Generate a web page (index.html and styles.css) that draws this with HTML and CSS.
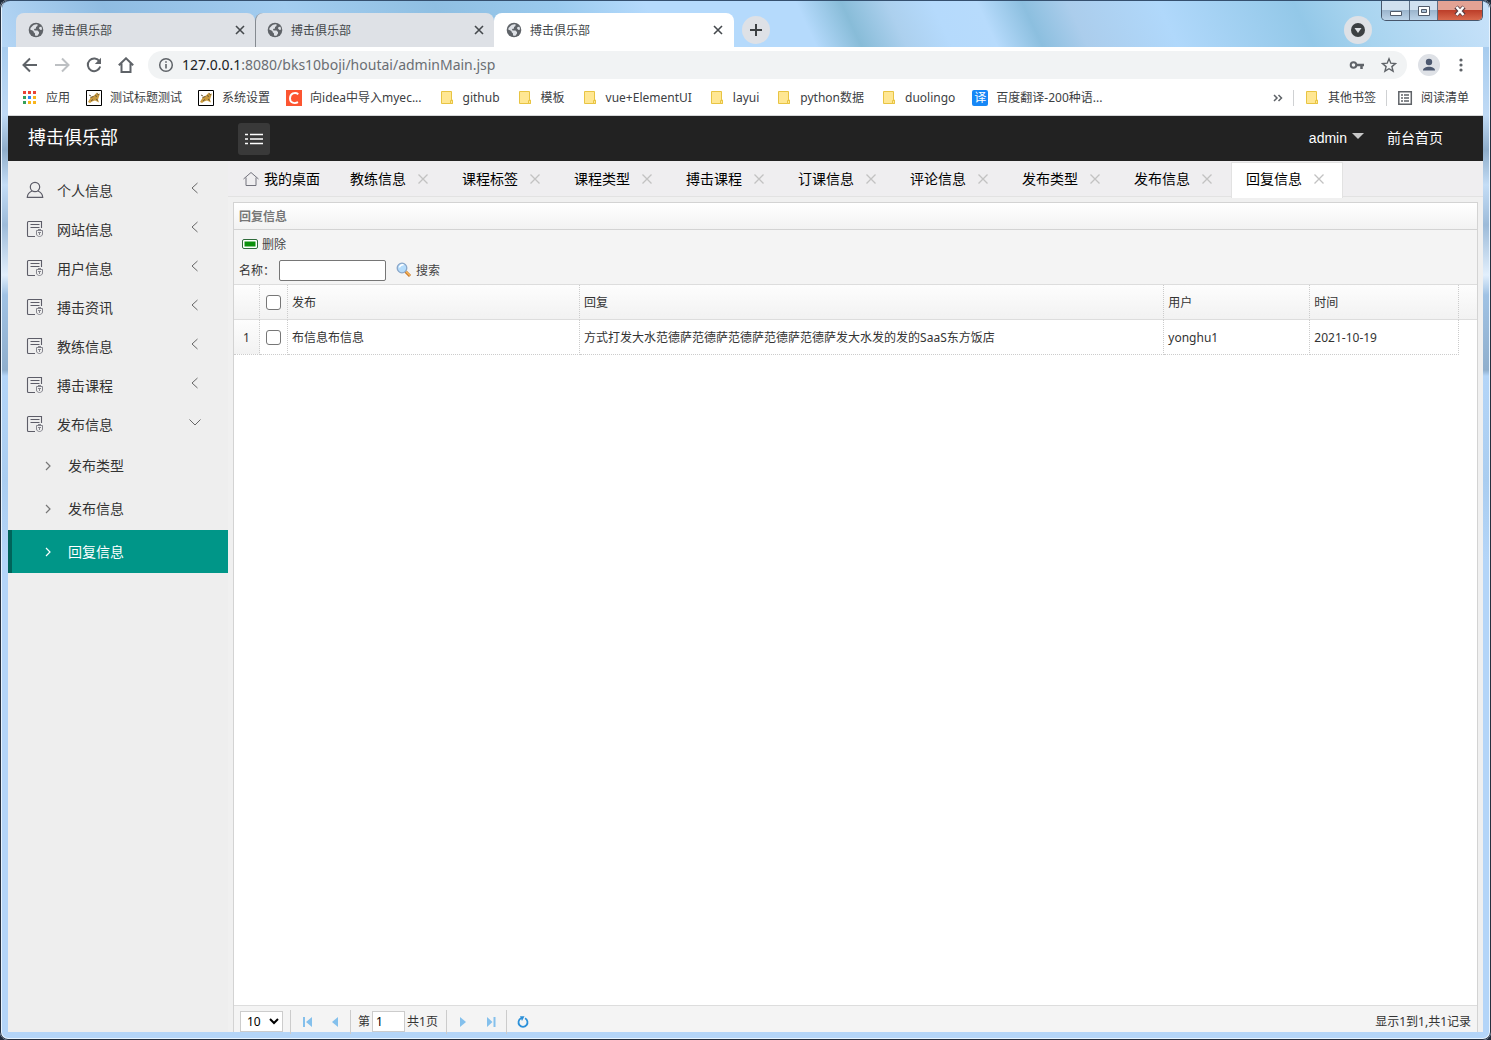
FILE: index.html
```
<!DOCTYPE html>
<html lang="zh-CN">
<head>
<meta charset="utf-8">
<title>搏击俱乐部</title>
<link rel="stylesheet" href="styles.css">
</head>
<body>
<svg class="defs" aria-hidden="true">
  <symbol id="globe" viewBox="0 0 16 16"><circle cx="8" cy="8" r="7.3" fill="#5f6368"/><path d="M4 4.500c1.500-2 4-2.700 5.500-2.200L9.500 4 8 5v1.500L6 7l.5 1.500h3L11 10v1.500l-1.500 2.200C7.500 14 7 13.500 7 13v-1.500L5.500 10V9L2.200 7.500C2.300 6.300 3 5.300 4 4.500z" fill="#dee1e6"/><path d="M11.500 5l2-.2.6 2.700-1.600.5-1.500-1.500z" fill="#dee1e6"/></symbol>
  <symbol id="x" viewBox="0 0 10 10"><path d="M1 1l8 8M9 1L1 9" fill="none" stroke="currentColor" stroke-width="1.600"/></symbol>
  <symbol id="thin-x" viewBox="0 0 10 10"><path d="M.5.5l9 9M9.500.5l-9 9" fill="none" stroke="currentColor" stroke-width="1.300"/></symbol>
  <symbol id="folder" viewBox="0 0 16 16"><path d="M2.500 1.500h10v8.500h1v3.500h-11z" fill="#ffe793" stroke="#e8c443"/><path d="M11.500 13.500V10.500h2v3z" fill="#ffe793" stroke="#e8c443"/></symbol>
  <symbol id="cat" viewBox="0 0 16 16"><path d="M.5.5h15v15H.5z" fill="#fff" stroke="#000"/><path d="M2 12l3-5 3-1.500 3-3 1 1.500 2-.5-1 3-1 3 1 3-2-1-2-1-3 1-2 1.500z" fill="#c99a3f"/><path d="M4.500 7.500l3-1M9 5.500l2 1M5 11l2-1.500M10 9l2 1.500M3 5l2 1M11 3.500l2 1.500" stroke="#6b5a3a"/></symbol>
  <symbol id="doc" viewBox="0 0 18 18"><path d="M15.500 8V1.500H2.500A1 1 0 0 0 1.500 2.500V15.500A1 1 0 0 0 2.500 16.500H9M4.500 4.500h9M4.500 7.500h9" fill="none" stroke="#5d5d68" stroke-width="1.100"/><path d="M10.500 10.500h6v3.500c0 1.500-1.500 2.500-3 2.500s-3-1-3-2.500zM12 12.500h3M13.500 12.500V15M12 9.500h3" fill="none" stroke="#85858d"/></symbol>
  <symbol id="left" viewBox="0 0 12 12"><path d="M8.500 1L3 6l5.500 5" fill="none" stroke="currentColor"/></symbol>
  <symbol id="right" viewBox="0 0 8 10"><path d="M2 1l4 4-4 4" fill="none" stroke="currentColor" stroke-width="1.200"/></symbol>
</svg>

<div class="titlebar">
  <div class="browser-tabs">
    <div class="btab"><svg class="i16"><use href="#globe"/></svg><span>搏击俱乐部</span><button aria-label="关闭"><svg class="i10"><use href="#x"/></svg></button></div>
    <div class="btab split"><svg class="i16"><use href="#globe"/></svg><span>搏击俱乐部</span><button aria-label="关闭"><svg class="i10"><use href="#x"/></svg></button></div>
    <div class="btab current"><svg class="i16"><use href="#globe"/></svg><span>搏击俱乐部</span><button aria-label="关闭"><svg class="i10"><use href="#x"/></svg></button></div>
  </div>
  <button class="round" aria-label="新标签页"><svg width="14" height="14"><path d="M7 1v12M1 7h12" stroke="#3c4043" stroke-width="2"/></svg></button>
  <button class="round search-tabs" aria-label="搜索标签页"><svg width="14" height="14"><circle cx="7" cy="7" r="7" fill="#3c4043"/><path d="M3.500 5h7L7 10z" fill="#dee1e6"/></svg></button>
  <div class="window-buttons">
    <button aria-label="最小化"><svg width="14" height="12"><path d="M1.500 6.500h11v4h-11z" fill="#fff" stroke="#515b6b"/></svg></button>
    <button aria-label="最大化"><svg width="14" height="12"><path d="M1.500 1.500h11v9h-11z" fill="#fff" stroke="#515b6b"/><path d="M4.500 4.500h5v3h-5z" fill="#a9bfd5" stroke="#515b6b"/></svg></button>
    <button class="shut" aria-label="关闭窗口"><svg width="14" height="12"><path d="M3 2l8 8M11 2l-8 8" stroke="#5a3d42" stroke-width="4.500"/><path d="M3.500 2l7 8M10.500 2l-7 8" stroke="#fff" stroke-width="2.500"/></svg></button>
  </div>
</div>

<div class="browser-bar">
  <div class="address-row">
    <button aria-label="后退"><svg class="i16" viewBox="0 0 16 16"><path d="M15 8H2M8 1.500L1.500 8 8 14.500" fill="none" stroke="#5f6368" stroke-width="2"/></svg></button>
    <button aria-label="前进"><svg class="i16" viewBox="0 0 16 16"><path d="M1 8h13M8 1.500L14.500 8 8 14.500" fill="none" stroke="#bdc0c3" stroke-width="2"/></svg></button>
    <button aria-label="刷新"><svg class="i16" viewBox="0 0 16 16"><path d="M13.500 4.500A6.300 6.300 0 1 0 14.200 9.500" fill="none" stroke="#5f6368" stroke-width="2"/><path d="M15 .8V7H8.800z" fill="#5f6368"/></svg></button>
    <button aria-label="主页"><svg class="i16" viewBox="0 0 16 16"><path d="M.8 8.200L8 1.300l7.200 6.900M3.500 6.500V15h9V6.500" fill="none" stroke="#5f6368" stroke-width="2"/></svg></button>
    <div class="omnibox">
      <svg class="i16" viewBox="0 0 16 16"><circle cx="8" cy="8" r="6.300" fill="none" stroke="#5f6368" stroke-width="1.500"/><path d="M8 7v4.500M8 4.200v1.600" stroke="#5f6368" stroke-width="1.600"/></svg>
      <span class="url"><b>127.0.0.1</b>:8080/bks10boji/houtai/adminMain.jsp</span>
      <button aria-label="密码"><svg class="i16" viewBox="0 0 16 16"><circle cx="4.500" cy="8" r="2.800" fill="none" stroke="#5f6368" stroke-width="2"/><path d="M7 8h8M12.500 8v4" stroke="#5f6368" stroke-width="2.500"/></svg></button>
      <button aria-label="收藏"><svg class="i16" viewBox="0 0 16 16"><path d="M8 1.800l1.800 4.400 4.700.4-3.600 3 1.200 4.600L8 11.700l-4.100 2.500 1.200-4.600-3.600-3 4.700-.4z" fill="none" stroke="#5f6368" stroke-width="1.400"/></svg></button>
    </div>
    <button class="avatar" aria-label="用户"><svg width="22" height="22"><circle cx="11" cy="11" r="11" fill="#dee1e6"/><circle cx="11" cy="8" r="3.200" fill="#4d5970"/><path d="M5 16.500c0-5 12-5 12 0z" fill="#4d5970"/></svg></button>
    <button aria-label="菜单"><svg class="i16" viewBox="0 0 16 16"><g fill="#5f6368"><circle cx="8" cy="3" r="1.600"/><circle cx="8" cy="8" r="1.600"/><circle cx="8" cy="13" r="1.600"/></g></svg></button>
  </div>
  <nav class="bookmarks">
    <a href="#"><svg class="i16" viewBox="0 0 16 16"><path d="M1 1h3v3H1zM6 1h3v3H6zM11 1h3v3h-3z" fill="#ea4335"/><path d="M1 6h3v3H1zM1 11h3v3H1z" fill="#34a05a"/><path d="M6 6h3v3H6z" fill="#2b86f5"/><path d="M11 6h3v3h-3zM6 11h3v3H6zM11 11h3v3h-3z" fill="#f9b51c"/></svg>应用</a>
    <a href="#"><svg class="i16"><use href="#cat"/></svg>测试标题测试</a>
    <a href="#"><svg class="i16"><use href="#cat"/></svg>系统设置</a>
    <a class="wide" href="#"><svg class="i16" viewBox="0 0 16 16"><path d="M0 0h16v16H0z" fill="#fc5531"/><path d="M12.300 4.200C9 1.500 4 3.500 4 8.500c0 4.500 4.500 5.500 8 3.700" fill="none" stroke="#fff" stroke-width="1.900"/></svg>向idea中导入myec...</a>
    <a class="wide" href="#"><svg class="i16"><use href="#folder"/></svg>github</a>
    <a class="wide" href="#"><svg class="i16"><use href="#folder"/></svg>模板</a>
    <a class="wide" href="#"><svg class="i16"><use href="#folder"/></svg>vue+ElementUI</a>
    <a class="wide" href="#"><svg class="i16"><use href="#folder"/></svg>layui</a>
    <a class="wide" href="#"><svg class="i16"><use href="#folder"/></svg>python数据</a>
    <a class="wide" href="#"><svg class="i16"><use href="#folder"/></svg>duolingo</a>
    <a href="#"><span class="fanyi">译</span>百度翻译-200种语...</a>
    <button class="more" aria-label="更多书签"><svg width="10" height="8"><path d="M1 1l3 3-3 3M5.500 1l3 3-3 3" fill="none" stroke="#5f6368" stroke-width="1.500"/></svg></button>
    <a class="ruled" href="#"><svg class="i16"><use href="#folder"/></svg>其他书签</a>
    <a class="ruled" href="#"><svg class="i16" viewBox="0 0 16 16"><path d="M1.800 1.800h12.500v12.500H1.800z" fill="none" stroke="#5f6368" stroke-width="1.500"/><path d="M4 5h2M7 5h5M4 8h2M7 8h5M4 11h2M7 11h5" stroke="#5f6368" stroke-width="1.500"/></svg>阅读清单</a>
  </nav>
</div>

<header class="app-head">
  <h1>搏击俱乐部</h1>
  <button class="toggle" aria-label="折叠菜单"><svg width="18" height="12"><path d="M0 1.500h3M5 1.500h13M0 6h3M5 6h13M0 10.500h3M5 10.500h13" stroke="#fff" stroke-width="1.300"/></svg></button>
  <button class="account">admin <i></i></button>
  <a href="#">前台首页</a>
</header>

<div class="app">
  <nav class="side">
    <button><svg class="i18" viewBox="0 0 18 18"><circle cx="9" cy="6" r="4.700" fill="none" stroke="#5d5d68" stroke-width="1.200"/><path d="M6 10C3.500 11 1.500 13 1.300 16.300h15.400C16.500 13 14.500 11 12 10" fill="none" stroke="#5d5d68" stroke-width="1.200"/></svg><span>个人信息</span><svg class="chev"><use href="#left"/></svg></button>
    <button><svg class="i18"><use href="#doc"/></svg><span>网站信息</span><svg class="chev"><use href="#left"/></svg></button>
    <button><svg class="i18"><use href="#doc"/></svg><span>用户信息</span><svg class="chev"><use href="#left"/></svg></button>
    <button><svg class="i18"><use href="#doc"/></svg><span>搏击资讯</span><svg class="chev"><use href="#left"/></svg></button>
    <button><svg class="i18"><use href="#doc"/></svg><span>教练信息</span><svg class="chev"><use href="#left"/></svg></button>
    <button><svg class="i18"><use href="#doc"/></svg><span>搏击课程</span><svg class="chev"><use href="#left"/></svg></button>
    <button aria-expanded="true"><svg class="i18"><use href="#doc"/></svg><span>发布信息</span><svg class="chev" viewBox="0 0 12 12"><path d="M.5 3.500L6 9l5.500-5.500" fill="none" stroke="currentColor"/></svg></button>
    <a href="#"><svg class="arrow"><use href="#right"/></svg>发布类型</a>
    <a href="#"><svg class="arrow"><use href="#right"/></svg>发布信息</a>
    <a href="#" class="selected"><svg class="arrow"><use href="#right"/></svg>回复信息</a>
  </nav>

  <main>
    <div class="page-tabs">
      <a class="home" href="#"><svg width="16" height="16" viewBox="0 0 16 16"><path d="M.5 8L8 1.500 15.500 8M3 6.500v8h10v-8" fill="none" stroke="#73737d"/></svg>我的桌面</a>
      <a href="#">教练信息<svg class="i10"><use href="#thin-x"/></svg></a>
      <a href="#">课程标签<svg class="i10"><use href="#thin-x"/></svg></a>
      <a href="#">课程类型<svg class="i10"><use href="#thin-x"/></svg></a>
      <a href="#">搏击课程<svg class="i10"><use href="#thin-x"/></svg></a>
      <a href="#">订课信息<svg class="i10"><use href="#thin-x"/></svg></a>
      <a href="#">评论信息<svg class="i10"><use href="#thin-x"/></svg></a>
      <a href="#">发布类型<svg class="i10"><use href="#thin-x"/></svg></a>
      <a href="#">发布信息<svg class="i10"><use href="#thin-x"/></svg></a>
      <a href="#" class="current">回复信息<svg class="i10"><use href="#thin-x"/></svg></a>
    </div>

    <section class="panel">
      <h2>回复信息</h2>
      <div class="tools">
        <div class="tool-row"><button class="delete"><svg width="16" height="16"><rect x=".5" y="3.500" width="15" height="9" rx="1.500" fill="#fff" stroke="#2f6b3a"/><path d="M2.500 5.500h11v5h-11z" fill="#0c910c"/></svg><span>删除</span></button></div>
        <div class="tool-row">
          <label for="name">名称：</label><input id="name" type="text">
          <button class="search"><svg width="16" height="16"><path d="M9.500 9.500l4.500 4.500" stroke="#c8772a" stroke-width="3"/><path d="M9.500 9l4.500 4.500" stroke="#f5b65a" stroke-width="1.500"/><circle cx="6" cy="6" r="4.800" fill="#b5dcfb" stroke="#8aa6c8" stroke-width="1.300"/><path d="M3.500 5.500a3 3 0 0 1 4-2.500" stroke="#fff" stroke-width="1.500" fill="none"/></svg><span>搜索</span></button>
        </div>
      </div>
      <table>
        <colgroup><col class="c-num"><col class="c-check"><col class="c-post"><col class="c-reply"><col class="c-user"><col><col class="c-end"></colgroup>
        <thead><tr><th></th><th><input type="checkbox" aria-label="全选"></th><th>发布</th><th>回复</th><th>用户</th><th>时间</th><th></th></tr></thead>
        <tbody><tr><td>1</td><td><input type="checkbox" aria-label="选择第1行"></td><td>布信息布信息</td><td>方式打发大水范德萨范德萨范德萨范德萨范德萨发大水发的发的SaaS东方饭店</td><td>yonghu1</td><td>2021-10-19</td><td></td></tr></tbody>
      </table>
      <div class="pager">
        <select aria-label="每页条数"><option>10</option></select>
        <span class="rule"></span>
        <button aria-label="首页"><svg width="12" height="12"><path d="M2 1h2v10H2zM11 1v10L5 6z" fill="#84c0ec"/></svg></button>
        <button aria-label="上一页"><svg width="12" height="12"><path d="M9 1v10L3 6z" fill="#84c0ec"/></svg></button>
        <span class="rule"></span>
        <label for="page">第</label><input id="page" type="text" value="1"><span class="total">共1页</span>
        <span class="rule"></span>
        <button aria-label="下一页"><svg width="12" height="12"><path d="M3 1v10l6-5z" fill="#84c0ec"/></svg></button>
        <button aria-label="末页"><svg width="12" height="12"><path d="M2 1v10l5.500-5zM8.500 1h2v10h-2z" fill="#84c0ec"/></svg></button>
        <span class="rule"></span>
        <button aria-label="刷新表格"><svg width="12" height="12"><path d="M4 2.300A4.500 4.500 0 1 0 8 2.300" fill="none" stroke="#2b90d9" stroke-width="1.800"/><path d="M3 .3h4.500L5 5z" fill="#2b90d9"/></svg></button>
        <span class="count">显示1到1,共1记录</span>
      </div>
    </section>
  </main>
</div>
</body>
</html>
```
FILE: styles.css
```
* { box-sizing: border-box; }

html { background: #1f2a3a; }

body {
  margin: 0;
  min-height: 100vh;
  display: flex;
  flex-direction: column;
  padding: 0 8px 8px;
  border-radius: 8px;
  box-shadow: inset 0 0 0 1px #26303f, inset 0 0 0 2px #e8f4ff;
  background: linear-gradient(#a5cbee 40px, #c0daf5 115px, #8fadca 150px, #c4ddf6 185px, #9dbbd9 225px, #e2effc 275px, #a0c2e4 295px, #90afcd 370px, #b4d5f8 376px, #aacdf0 480px, #b4d5f8 560px);
  font: 12px/16px "Noto Sans", "Noto Sans CJK SC", sans-serif;
  color: #333;
}

button, input, select { font: inherit; color: inherit; }
button { padding: 0; border: 0; background: none; display: flex; align-items: center; justify-content: center; }
a { color: inherit; text-decoration: none; }
svg { display: block; flex: none; }
.defs { position: absolute; width: 0; height: 0; }
.i10 { width: 10px; height: 10px; }
.i16 { width: 16px; height: 16px; }
.i18 { width: 18px; height: 18px; }

/* Window frame and tab strip */
.titlebar {
  height: 47px;
  display: flex;
  margin: 0 -6px;
  padding: 0 6px 0 14px;
  border-top: 1px solid #35506f;
  border-radius: 8px 8px 0 0;
  background: linear-gradient(65deg, #b5d6f5, #8fbce2 8%, #a3cdf0 20%, #8fbfe2 30%, #9acaee 38%, #b5dafc 44%, #b5dafc 54%, #88bcd8 57%, #acd0ee 60%, #b5dafc 63%, #b7dbfc 66%, #8cbfdf 69%, #abcdec 72%, #b0d8fb 78%, #93c8e8 87%, #a8d4ef 91%, #c8e2fa);
}
.browser-tabs { display: flex; align-items: flex-end; }
.btab {
  width: 239px;
  height: 34px;
  display: flex;
  align-items: center;
  gap: 8px;
  padding: 0 10px 0 12px;
  background: #dee1e6;
  border-radius: 8px 8px 0 0;
  color: #45494d;
}
.btab span { flex: 1; padding-top: 2px; }
.btab.split { border-left: 1px solid #858a90; padding-left: 11px; }
.btab.current { background: #fff; width: 240px; padding-right: 11px; }
.round { width: 28px; height: 28px; margin: 15px 0 0 8px; border-radius: 50%; background: #dee1e6; }
.search-tabs { margin-left: auto; }
.window-buttons { display: flex; width: 102px; height: 20px; margin-left: 9px; border: 1px solid #47566b; border-top: 0; border-radius: 0 0 5px 5px; overflow: hidden; }
.window-buttons button { width: 28px; background: linear-gradient(#d0e0ef 45%, #9cb5cd 50%, #bcd3e8); border-right: 1px solid #5d6e84; }
.window-buttons .shut { flex: 1; border: 0; background: linear-gradient(#e2a294 45%, #bd3f2a 50%, #d9694d); }

/* Address row and bookmarks */
.browser-bar { background: #fff; border-bottom: 1px solid #d5d7d8; }
.address-row { display: flex; align-items: center; gap: 16px; height: 36px; padding: 0 14px; }
.omnibox { flex: 1; display: flex; align-items: center; gap: 16px; height: 28px; margin: 0 -5px 0 -2px; padding: 0 10px; border-radius: 14px; background: #f1f3f4; }
.url { flex: 1; margin-left: -8px; font-size: 14px; line-height: 20px; color: #6a6e73; }
.url b { font-weight: 400; color: #202124; }
.avatar { margin-right: -3px; }
.bookmarks { display: flex; align-items: center; gap: 16px; height: 32px; padding: 0 14px 2px; color: #3c4043; white-space: nowrap; }
.bookmarks a { display: flex; align-items: center; gap: 8px; }
.bookmarks .wide { margin-right: 1px; }
.more { margin-left: auto; margin-right: -6px; }
.fanyi { width: 16px; height: 16px; border-radius: 2px; background: #1687f6; color: #fff; text-align: center; }
.bookmarks .ruled { border-left: 1px solid #cfd1d3; padding-left: 10px; }
.ruled + .ruled { margin-left: -6px; }

/* Application header */
.app-head { display: flex; align-items: center; height: 45px; padding: 0 40px 0 20px; background: #222; color: #fff; font: 14px/20px "Liberation Sans", "Noto Sans CJK SC", sans-serif; }
.app-head h1 { width: 210px; margin: 0; padding-bottom: 2px; font-size: 18px; line-height: 24px; font-weight: 400; }
.app-head a, .account { padding-bottom: 2px; }
.toggle { width: 32px; height: 32px; border-radius: 3px; background: #393939; }
.account { margin-left: auto; margin-right: 23px; gap: 5px; }
.account i { border: 6px solid transparent; border-top-color: #c7c7c7; border-bottom: 0; margin-bottom: 4px; }

.app { flex: 1; display: flex; background: #f0f0f0; }

/* Side menu */
.side { width: 220px; flex: none; padding-top: 10px; background: #eee; font-size: 14px; line-height: 20px; }
.side button { width: 100%; height: 39px; padding: 0 27px 0 18px; gap: 13px; }
.side button span { flex: 1; text-align: left; }
.side .i18 { margin-bottom: 2px; }
.chev { width: 12px; height: 12px; margin-bottom: 6px; color: #666; }
.side a { display: flex; align-items: center; gap: 16px; height: 43px; padding-left: 32px; border-left: 4px solid transparent; }
.arrow { width: 8px; height: 10px; color: #777; }
.side .selected { background: #009688; border-color: #00635a; color: #fff; }
.selected .arrow { color: #fff; }

/* Page tabs */
main { flex: 1; min-width: 0; display: flex; flex-direction: column; }
.page-tabs { display: flex; height: 36px; border-bottom: 1px solid #e2e2e2; background: #efeef0; color: #000; font-size: 14px; line-height: 20px; white-space: nowrap; }
.page-tabs a { display: flex; align-items: center; gap: 12px; width: 112px; height: 36px; padding-left: 14px; }
.page-tabs .home { width: 108px; padding-left: 15px; gap: 5px; }
.page-tabs .i10 { color: #c2c2c2; }
.page-tabs .current { margin: 1px 0 0 -1px; padding: 0 0 3px 14px; background: #fff; border: 1px solid #e2e2e2; border-bottom: 0; }

/* Grid panel */
.panel { flex: 1; display: flex; flex-direction: column; margin: 5px 5px 0; border: 1px solid #d3d3d3; border-bottom: 0; background: #fff; }
.panel h2 { margin: 0; padding: 6px 5px 4px; height: 27px; font-size: 12px; line-height: 16px; color: #777; border-bottom: 1px solid #d3d3d3; background: linear-gradient(#fff, #f2f2f2); }
.tools { padding: 1px 5px; background: #f4f4f4; border-bottom: 1px solid #ddd; }
.tool-row { display: flex; align-items: center; height: 26px; }
.tools button { gap: 4px; color: #444; }
.delete { margin-left: 3px; }
.search { margin-left: 10px; }
.tool-row label { width: 40px; }
.tool-row label, .tool-row span { padding-top: 2px; }
.tool-row input { width: 107px; height: 21px; border: 1px solid #767676; border-radius: 2px; background: #fff; }
table { width: 100%; table-layout: fixed; border-collapse: separate; border-spacing: 0; }
.c-num { width: 26px; }
.c-check { width: 28px; }
.c-post { width: 23.5%; }
.c-reply { width: 47%; }
.c-user { width: 11.75%; }
.c-end { width: 18px; }
th, td { height: 35px; padding: 2px 4px 0; text-align: left; font-weight: 400; white-space: nowrap; overflow: hidden; border-right: 1px dotted #ccc; border-bottom: 1px dotted #ccc; }
th:nth-child(2), td:nth-child(2) { padding-top: 0; }
th { background: linear-gradient(#fdfdfd, #f2f2f2); border-bottom: 1px solid #ddd; }
th:last-child { border-right: 0; }
td:last-child { border: 0; }
td:first-child { text-align: center; background: linear-gradient(#fdfdfd, #f2f2f2); }
input[type="checkbox"] { appearance: none; display: block; width: 15px; height: 15px; margin: 0 2px; border: 1px solid #767676; border-radius: 3px; background: #fff; }

.pager { display: flex; align-items: center; margin-top: auto; padding: 5px 6px 0; height: 27px; border-top: 1px solid #ddd; background: #f4f4f4; }
.pager select { width: 43px; height: 21px; margin-right: 6px; padding: 0 2px; border: 1px solid #ccc; background: #fff; color: #000; }
.pager button { width: 28px; height: 21px; }
.pager input { width: 33px; height: 21px; padding: 0 3px; border: 1px solid #ccc; background: #fff; color: #000; margin: 0 2px; }
.rule { width: 1px; height: 24px; margin: 0 2px 0 1px; background: #ccc; }
.pager label { margin-left: 5px; }
.total { margin-right: 7px; }
.count { margin-left: auto; }
```
